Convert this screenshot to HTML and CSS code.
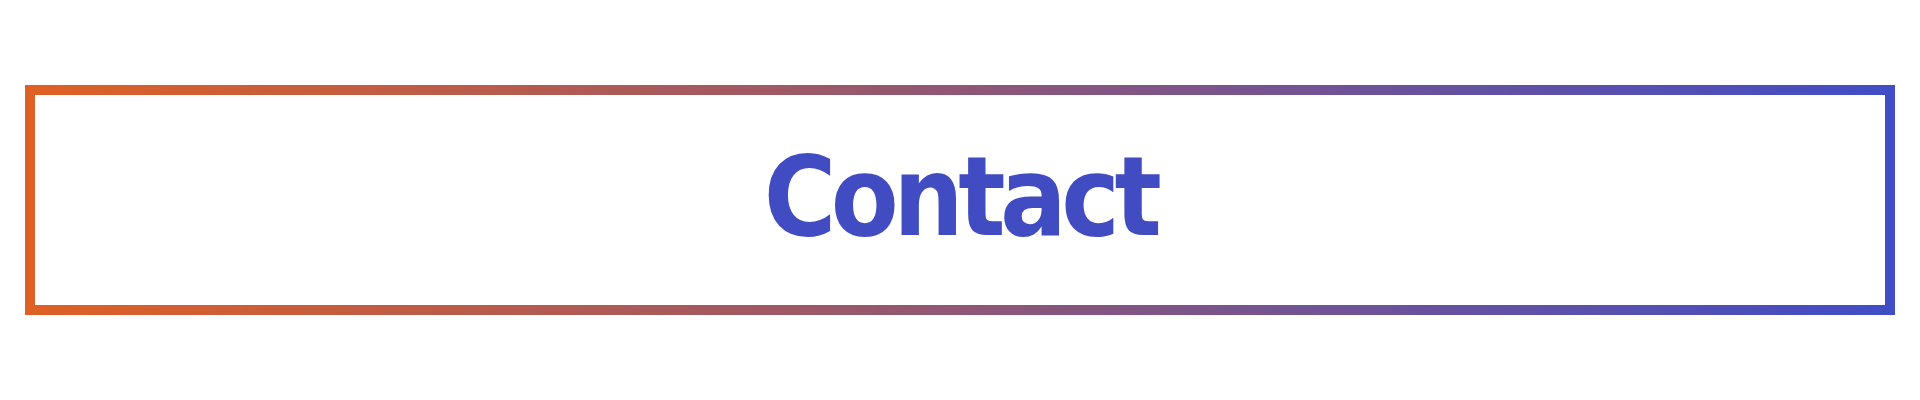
FILE: index.html
```html
<!DOCTYPE html>
<html lang="en">
<head>
    <meta charset="UTF-8">
    <meta name="viewport" content="width=device-width, initial-scale=1.0">
    <title>Contact</title>
    <link rel="stylesheet" href="styles.css">
</head>
<body>
    <div class="page">
        <div class="title-box">
            <h1>Contact</h1>
        </div>
    </div>
</body>
</html>
```

FILE: styles.css
```css
body {
    margin: 0;
    padding: 0;
    background-color: #ffffff;
    font-family: "DejaVu Sans Condensed", "DejaVu Sans", sans-serif;
}

.page {
    padding: 85px 25px;
}

.title-box {
    height: 203px;
    padding-bottom: 7px;
    border: 10px solid;
    border-image: linear-gradient(to right, #de6024, #414dc6) 1;
    display: flex;
    align-items: center;
    justify-content: center;
}

h1 {
    margin: 0;
    font-size: 110px;
    font-weight: bold;
    color: #424cc2;
    letter-spacing: -5.5px;
}
```
